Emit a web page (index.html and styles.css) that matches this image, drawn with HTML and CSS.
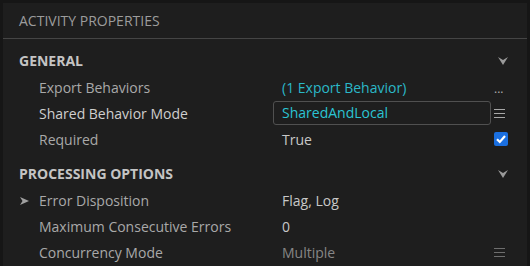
FILE: index.html
```html
<!DOCTYPE html>
<html lang="en">
<head>
    <meta charset="UTF-8">
    <title>Activity Properties</title>
    <link rel="stylesheet" href="styles.css">
</head>
<body>
    <div class="panel">
        <div class="panel-title">ACTIVITY PROPERTIES</div>

        <div class="section">
            <div class="section-head">
                <span>GENERAL</span>
                <svg class="chevron" width="10" height="8" viewBox="0 0 10 8"><path d="M0 0 L5 3 L10 0 L5 8 Z" fill="#9a9a9a"/></svg>
            </div>
            <div class="prop">
                <div class="prop-name">Export Behaviors</div>
                <div class="prop-value link">(1 Export Behavior)</div>
                <div class="prop-action dots">...</div>
            </div>
            <div class="prop">
                <div class="prop-name bright">Shared Behavior Mode</div>
                <div class="prop-value"><div class="field">SharedAndLocal</div></div>
                <div class="prop-action"><span class="menu"></span></div>
            </div>
            <div class="prop">
                <div class="prop-name">Required</div>
                <div class="prop-value">True</div>
                <div class="prop-action">
                    <span class="check">
                        <svg width="14" height="14" viewBox="0 0 14 14"><path d="M3 7.2 L5.8 10 L11 4" stroke="#fff" stroke-width="2.2" fill="none"/></svg>
                    </span>
                </div>
            </div>
        </div>

        <div class="section">
            <div class="section-head">
                <span>PROCESSING OPTIONS</span>
                <svg class="chevron" width="10" height="8" viewBox="0 0 10 8"><path d="M0 0 L5 3 L10 0 L5 8 Z" fill="#9a9a9a"/></svg>
            </div>
            <div class="prop">
                <div class="prop-name">
                    <svg class="arrow" width="9" height="8" viewBox="0 0 9 8"><path d="M0 0 L9 4 L0 8 L2.5 4 Z" fill="#a0a0a0"/></svg>
                    Error Disposition
                </div>
                <div class="prop-value">Flag, Log</div>
                <div class="prop-action"></div>
            </div>
            <div class="prop">
                <div class="prop-name">Maximum Consecutive Errors</div>
                <div class="prop-value">0</div>
                <div class="prop-action"></div>
            </div>
            <div class="prop">
                <div class="prop-name">Concurrency Mode</div>
                <div class="prop-value muted">Multiple</div>
                <div class="prop-action"><span class="menu dim"></span></div>
            </div>
        </div>
    </div>
</body>
</html>
```

FILE: styles.css
```css
body {
    margin: 0;
    background-color: #161616;
    font-family: "Open Sans", "Noto Sans", sans-serif;
    font-size: 14px;
    color: #a9a9a9;
    overflow: hidden;
}
.panel {
    margin: 3px 3px 0 3px;
    height: 263px;
    background-color: #1e1e1e;
}
.panel-title {
    height: 35px;
    line-height: 35px;
    padding-left: 16px;
    border-bottom: 1px solid #454545;
    color: #9c9c9c;
}
.section {
    padding-top: 7px;
}
.section-head {
    height: 28px;
    display: flex;
    align-items: center;
    justify-content: space-between;
    padding: 0 19px 0 16px;
    font-weight: bold;
    color: #c4c4c4;
}
.chevron {
    margin-top: 1px;
}
.prop {
    height: 26px;
    display: grid;
    grid-template-columns: 270px 218px 1fr;
    align-items: center;
}
.prop-name {
    position: relative;
    padding-left: 36px;
    white-space: nowrap;
}
.prop-name.bright {
    color: #cfcfcf;
}
.arrow {
    position: absolute;
    left: 17px;
    top: 6px;
}
.prop-value {
    padding-left: 9px;
    color: #c8c8c8;
    white-space: nowrap;
}
.prop-value.link {
    color: #2bb8c8;
}
.prop-value.muted {
    color: #868686;
}
.field {
    margin-left: -9px;
    height: 22px;
    line-height: 22px;
    padding-left: 8px;
    border: 1px solid #505050;
    border-radius: 3px;
    color: #2bc4d4;
}
.prop-action {
    padding-left: 3px;
    display: flex;
    align-items: center;
}
.dots {
    color: #b0b0b0;
    font-size: 12px;
    padding-top: 2px;
}
.menu {
    display: block;
    width: 11px;
    height: 9px;
    border-top: 1px solid #a8a8a8;
    border-bottom: 1px solid #a8a8a8;
    position: relative;
    box-sizing: border-box;
}
.menu::after {
    content: "";
    position: absolute;
    left: 0;
    right: 0;
    top: 3px;
    border-top: 1px solid #a8a8a8;
}
.menu.dim,
.menu.dim::after {
    border-color: #6e6e6e;
}
.check {
    display: flex;
    align-items: center;
    justify-content: center;
    width: 14px;
    height: 14px;
    border-radius: 2px;
    background-color: #1a6fe0;
}
```
